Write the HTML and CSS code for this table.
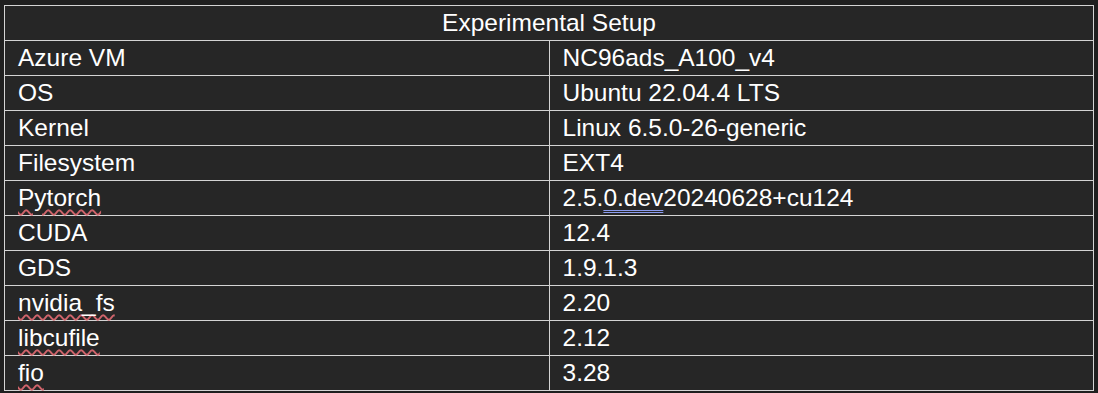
FILE: index.html
```html
<!DOCTYPE html>
<html>
<head>
<meta charset="utf-8">
<link rel="stylesheet" href="styles.css">
</head>
<body>
<table class="setup">
  <tr><th class="title" colspan="2">Experimental Setup</th></tr>
  <tr><td class="key">Azure VM</td><td>NC96ads_A100_v4</td></tr>
  <tr><td class="key">OS</td><td>Ubuntu 22.04.4 LTS</td></tr>
  <tr><td class="key">Kernel</td><td>Linux 6.5.0-26-generic</td></tr>
  <tr><td class="key">Filesystem</td><td>EXT4</td></tr>
  <tr><td class="key"><span class="spell">Pytorch</span></td><td>2.5.<span class="grammar">0.dev</span>20240628+cu124</td></tr>
  <tr><td class="key">CUDA</td><td>12.4</td></tr>
  <tr><td class="key">GDS</td><td>1.9.1.3</td></tr>
  <tr><td class="key"><span class="spell">nvidia_fs</span></td><td>2.20</td></tr>
  <tr><td class="key"><span class="spell">libcufile</span></td><td>2.12</td></tr>
  <tr><td class="key"><span class="spell">fio</span></td><td>3.28</td></tr>
</table>
</body>
</html>
```
FILE: styles.css
```css
html, body {
  margin: 0;
  padding: 0;
  background: #1f1f1f;
}
body {
  padding: 5px 0 0 4px;
  font-family: "Liberation Sans", Arial, sans-serif;
  color: #ffffff;
}
.setup {
  border-collapse: collapse;
  width: 1090px;
  background: #262626;
  table-layout: fixed;
  font-size: 24.5px;
}
.setup th, .setup td {
  border: 1px solid #d4d4d4;
  height: 34px;
  padding: 0 0 0 13px;
  text-align: left;
  font-weight: normal;
  line-height: 24px;
  vertical-align: middle;
}
.setup td.key {
  width: 531px;
}
.setup th.title {
  text-align: center;
  padding: 0;
}
.spell {
  text-decoration: underline wavy #d0646b;
  text-decoration-thickness: 1.5px;
  text-underline-offset: 3px;
}
.grammar {
  text-decoration: underline double #8c9cf0;
  text-decoration-thickness: 1px;
  text-underline-offset: 4px;
}
```
